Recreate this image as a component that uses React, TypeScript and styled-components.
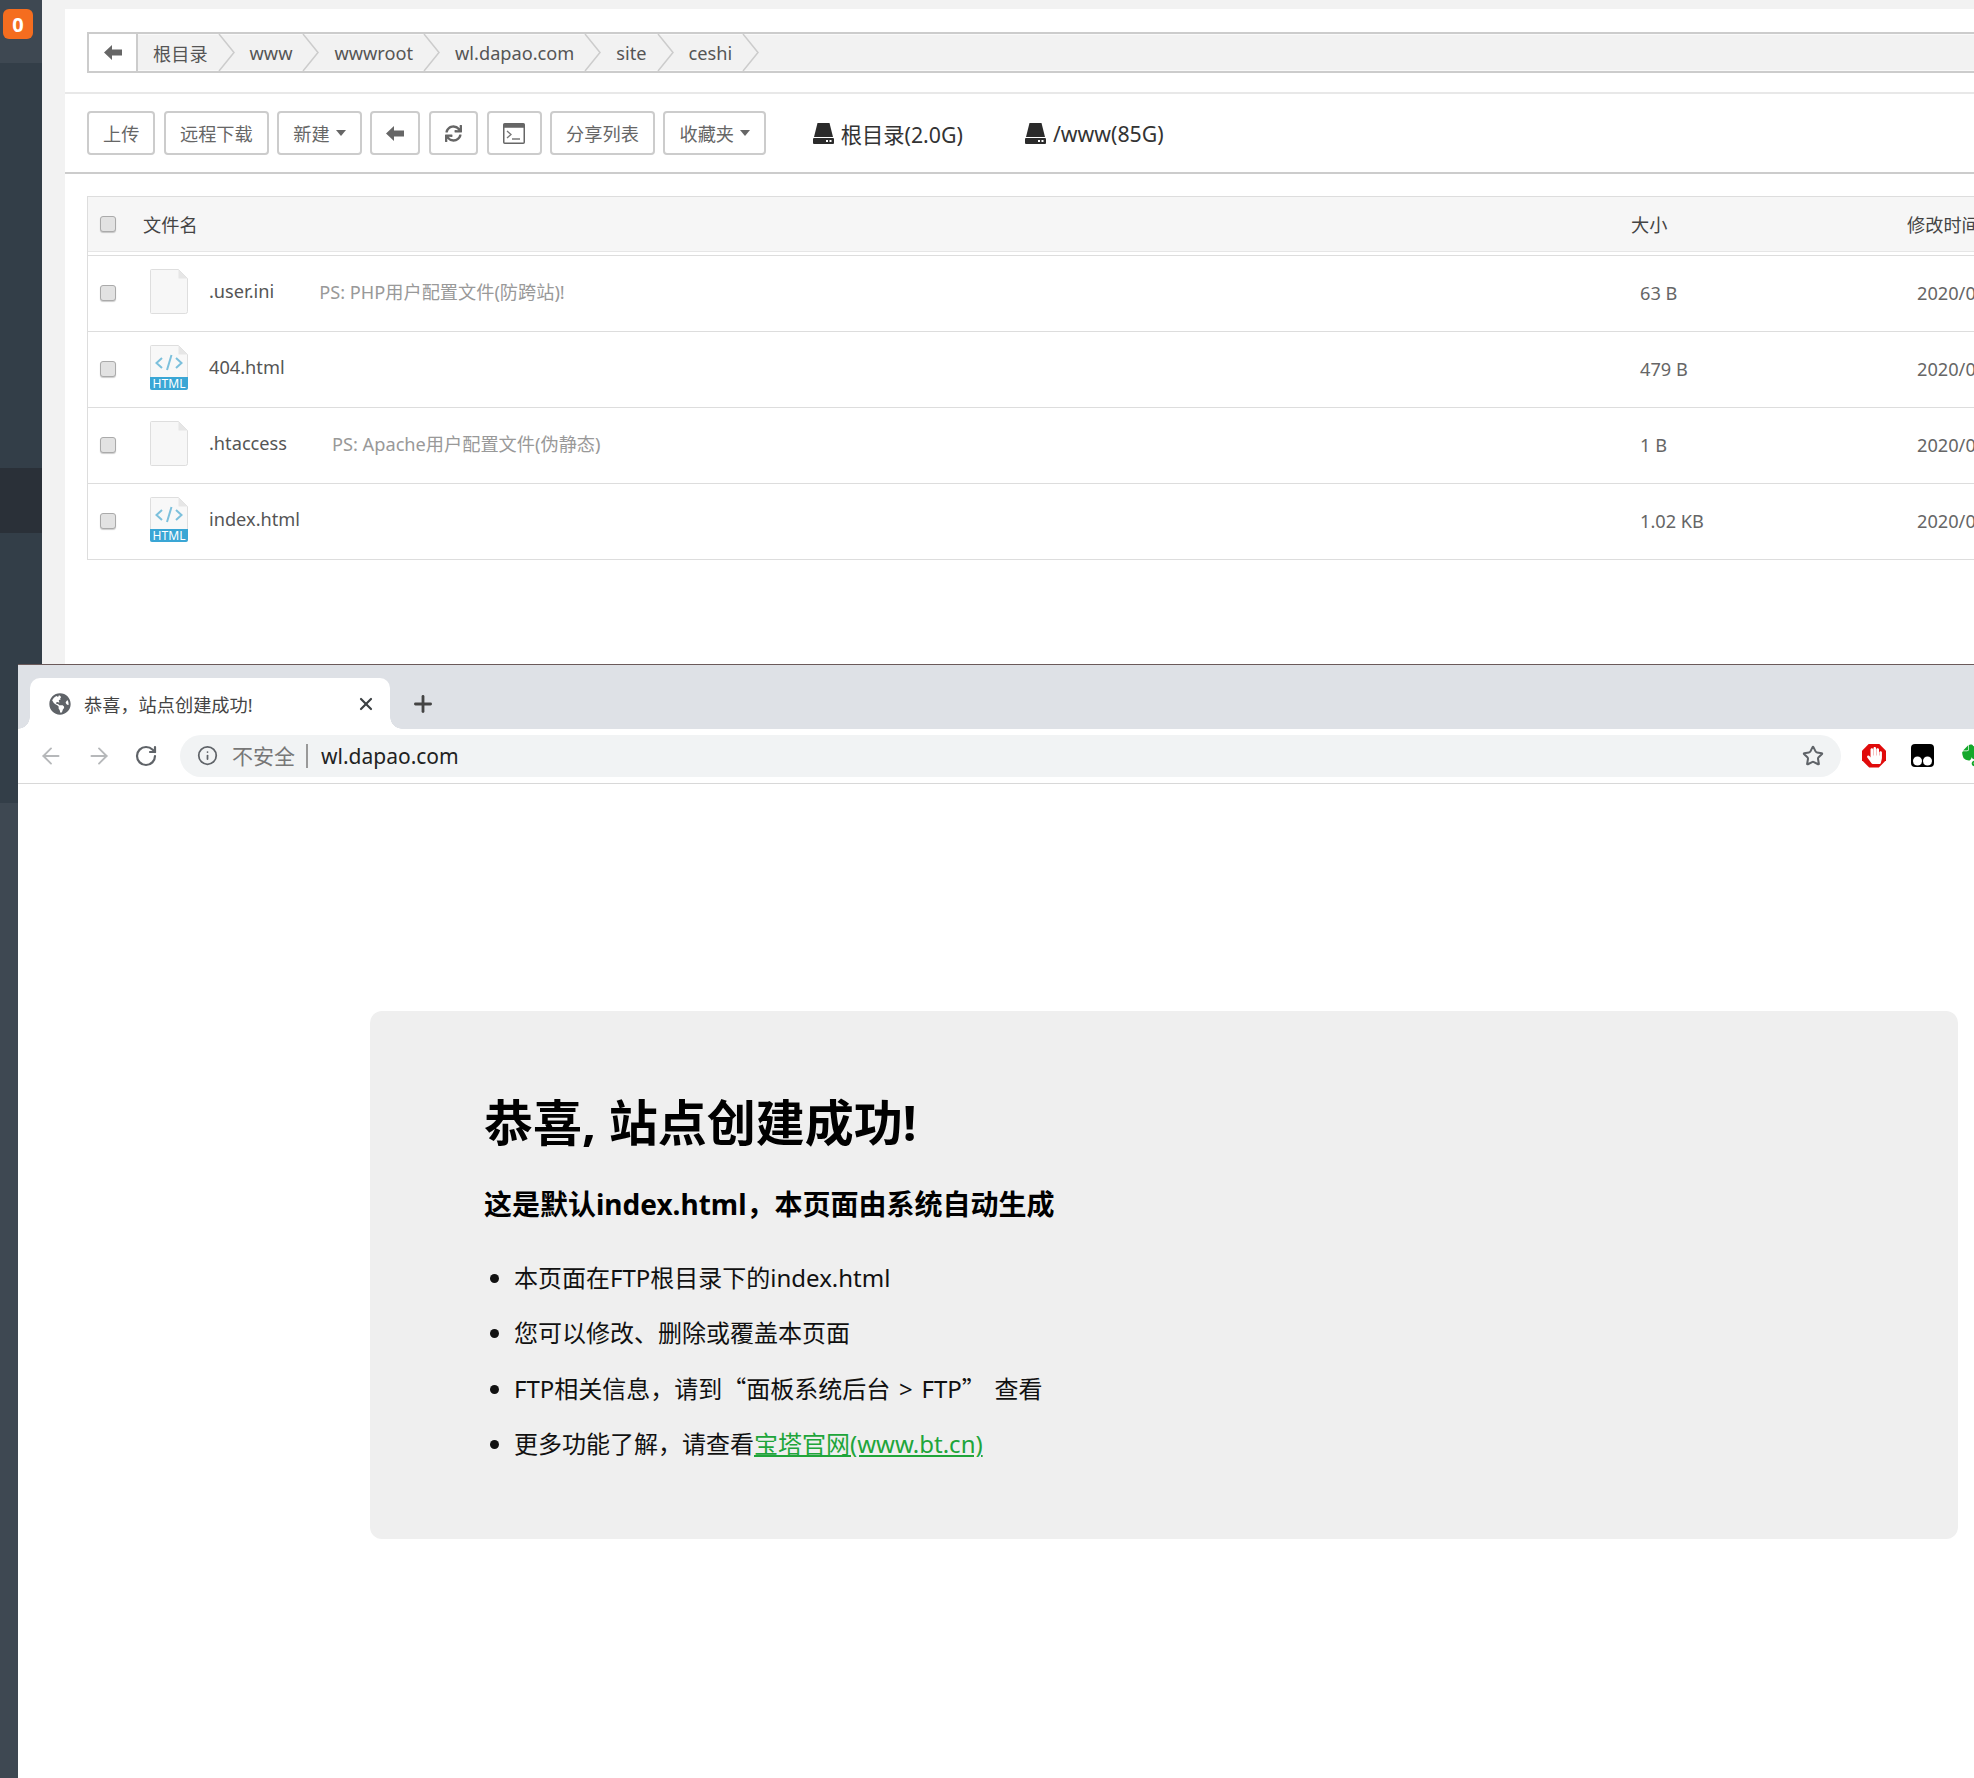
import styled, { createGlobalStyle } from 'styled-components'
import { ArrowLeft, ArrowRight, Info, Plus, RotateCw, Star, X } from 'lucide-react'
import { FaEvernote, FaGlobeAmericas, FaHandPaper, FaSync } from 'react-icons/fa'

const FONT = `"Noto Sans", "Noto Sans CJK SC", sans-serif`

const GlobalStyle = createGlobalStyle`
  html, body {
    margin: 0;
    padding: 0;
    width: 1974px;
    height: 1778px;
    overflow: hidden;
    background: #fff;
    font-family: ${FONT};
  }
`

const crumbs = ['根目录', 'www', 'wwwroot', 'wl.dapao.com', 'site', 'ceshi']

const files = [
  { name: '.user.ini', note: 'PS: PHP用户配置文件(防跨站)!', size: '63 B', html: false },
  { name: '404.html', note: '', size: '479 B', html: true },
  { name: '.htaccess', note: 'PS: Apache用户配置文件(伪静态)', size: '1 B', html: false },
  { name: 'index.html', note: '', size: '1.02 KB', html: true },
]

const BackArrow = () => (
  <svg width="18" height="15" viewBox="0 0 18 15">
    <path d="M0 7.5 8 0v4.5h10v6H8V15z" fill="#666" />
  </svg>
)

const Chevron = () => (
  <ChevronSvg width="17" height="37" viewBox="0 0 17 37">
    <path d="M1 0 16 18.5 1 37" fill="none" stroke="#ccc" strokeWidth="1.5" />
  </ChevronSvg>
)

const TerminalIcon = () => (
  <svg width="22" height="21" viewBox="0 0 22 21">
    <rect x="0.75" y="0.75" width="20.5" height="19.5" rx="1" fill="#fff" stroke="#666" strokeWidth="1.5" />
    <rect x="0.75" y="0.75" width="20.5" height="4" fill="#666" />
    <path d="M4 8l4 3.5L4 15" fill="none" stroke="#777" strokeWidth="1.3" />
    <path d="M9 16h8" stroke="#777" strokeWidth="1.5" />
  </svg>
)

const DiskIcon = () => (
  <svg width="21" height="21" viewBox="0 0 21 21">
    <path d="M4.5 0h12l3.5 14H1z" fill="#2b2b2b" />
    <rect x="0" y="15" width="21" height="6" rx="1" fill="#2b2b2b" />
    <rect x="13" y="17" width="2" height="2" fill="#fff" />
    <rect x="16.5" y="17" width="2" height="2" fill="#fff" />
  </svg>
)

const FileIcon = ({ html }: { html: boolean }) => (
  <FileSvg width="38" height="45" viewBox="0 0 38 45">
    <path d="M1.5.5h27l9 9v33a2 2 0 0 1-2 2h-34a1 1 0 0 1-1-1V1.5a1 1 0 0 1 1-1z" fill={html ? '#f8f8f8' : '#f7f7f7'} stroke="#dedede" />
    <path d="M28.5.5v9h9z" fill="#e6e6e6" />
    {html && (
      <>
        <path d="M12 13l-5.500 5 5.500 5M26 13l5.500 5-5.500 5M21.500 10l-4.500 15" fill="none" stroke="#7cc0dc" strokeWidth="2" />
        <path d="M0 32h38v11a2 2 0 0 1-2 2H2a2 2 0 0 1-2-2z" fill="#3aa6d5" />
        <text x="19" y="43" textAnchor="middle" fontSize="12.500" fill="#fff" fontFamily="Noto Sans, sans-serif" textLength="33" lengthAdjust="spacingAndGlyphs">HTML</text>
      </>
    )}
  </FileSvg>
)

const TamperIcon = () => (
  <svg width="23" height="23" viewBox="0 0 23 23">
    <rect width="23" height="23" rx="4" fill="#000" />
    <circle cx="6.500" cy="17" r="4.500" fill="#fff" />
    <circle cx="16.500" cy="17" r="4.500" fill="#fff" />
  </svg>
)

export default function App() {
  return (
    <Stage>
      <GlobalStyle />
      <Sidebar>
        <SideBlock $h={63} $bg="#3e4852">
          <Badge>0</Badge>
        </SideBlock>
        <SideBlock $h={405} $bg="#333e48" />
        <SideBlock $h={65} $bg="#2a3038" />
        <SideBlock $h={270} $bg="#333e48" />
        <SideBlock $h={975} $bg="#3e4852" />
      </Sidebar>

      <Main>
        <Panel>
          <PathRow>
            <Breadcrumb>
              <PathBack>
                <BackArrow />
              </PathBack>
              {crumbs.map((c) => (
                <Crumb key={c}>
                  <CrumbText>{c}</CrumbText>
                  <Chevron />
                </Crumb>
              ))}
            </Breadcrumb>
          </PathRow>

          <Toolbar>
            <Btn>上传</Btn>
            <Btn>远程下载</Btn>
            <Btn>
              新建
              <Caret />
            </Btn>
            <IconBtn $w={50}>
              <BackArrow />
            </IconBtn>
            <IconBtn $w={49}>
              <FaSync size={17} color="#666" />
            </IconBtn>
            <IconBtn $w={55}>
              <TerminalIcon />
            </IconBtn>
            <Btn>分享列表</Btn>
            <Btn>
              收藏夹
              <Caret />
            </Btn>
            <DiskList>
              <Disk>
                <DiskIcon />
                根目录(2.0G)
              </Disk>
              <Disk>
                <DiskIcon />
                /www(85G)
              </Disk>
            </DiskList>
          </Toolbar>

          <Table>
            <HeadRow>
              <CheckCell>
                <CheckBox />
              </CheckCell>
              <HeadCell>文件名</HeadCell>
              <HeadCell>大小</HeadCell>
              <HeadCell>修改时间</HeadCell>
            </HeadRow>
            {files.map((f) => (
              <FileRow key={f.name}>
                <CheckCell>
                  <CheckBox />
                </CheckCell>
                <NameCell>
                  <FileIcon html={f.html} />
                  <FileName>{f.name}</FileName>
                  {f.note && <FileNote>{f.note}</FileNote>}
                </NameCell>
                <ValueCell $pad={9}>{f.size}</ValueCell>
                <ValueCell $pad={10}>2020/0</ValueCell>
              </FileRow>
            ))}
          </Table>
        </Panel>
      </Main>

      <BrowserWindow>
        <TabStrip>
          <ActiveTab>
            <FaGlobeAmericas size={22} color="#5f6368" />
            <TabTitle>恭喜，站点创建成功!</TabTitle>
            <X size={20} strokeWidth={2.6} color="#3c4043" />
          </ActiveTab>
          <NewTab>
            <Plus size={26} strokeWidth={2.6} color="#444" />
          </NewTab>
        </TabStrip>

        <NavBar>
          <NavIcons>
            <ArrowLeft size={26} strokeWidth={1.7} color="#b6b8ba" />
            <ArrowRight size={26} strokeWidth={1.7} color="#b6b8ba" />
            <RotateCw size={24} strokeWidth={2.2} color="#5f6368" />
          </NavIcons>
          <Omnibox>
            <Info size={21} strokeWidth={2} color="#5f6368" />
            <Insecure>不安全</Insecure>
            <Url>wl.dapao.com</Url>
            <Star size={22} strokeWidth={2.2} color="#5f6368" />
          </Omnibox>
          <Extensions>
            <StopSign>
              <FaHandPaper size={17} color="#fff" />
            </StopSign>
            <TamperIcon />
            <FaEvernote size={25} color="#14a82b" />
          </Extensions>
        </NavBar>

        <Page>
          <Card>
            <Title>恭喜, 站点创建成功!</Title>
            <SubTitle>这是默认index.html，本页面由系统自动生成</SubTitle>
            <Tips>
              <li>本页面在FTP根目录下的index.html</li>
              <li>您可以修改、删除或覆盖本页面</li>
              <li>
                FTP相关信息，请到<WideQuote>“</WideQuote>面板系统后台 &gt; FTP<WideQuote>”</WideQuote> 查看
              </li>
              <li>
                更多功能了解，请查看<GreenLink href="#">宝塔官网(www.bt.cn)</GreenLink>
              </li>
            </Tips>
          </Card>
        </Page>
      </BrowserWindow>
    </Stage>
  )
}

const Stage = styled.div`
  position: relative;
  display: flex;
  width: 1974px;
  height: 1778px;
  overflow: hidden;
  background: #f2f2f2;
`

const Sidebar = styled.aside`
  display: flex;
  flex-direction: column;
  flex: 0 0 42px;
`

const SideBlock = styled.div<{ $h: number; $bg: string }>`
  flex: 0 0 ${(p) => p.$h}px;
  background: ${(p) => p.$bg};
  padding: 9px 0 0 3px;
  box-sizing: border-box;
`

const Badge = styled.div`
  display: flex;
  align-items: center;
  justify-content: center;
  width: 30px;
  height: 30px;
  border-radius: 6px;
  background: #f56d1f;
  color: #fff;
  font-size: 20px;
  font-weight: 700;
`

const Main = styled.main`
  flex: 1;
  min-width: 0;
  padding: 9px 0 0 23px;
`

const Panel = styled.section`
  height: 100%;
  background: #fff;
  overflow: hidden;
  font-size: 18.2px;
  color: #555;
`

const PathRow = styled.div`
  padding: 23px 0 19px 22px;
  border-bottom: 2px solid #e8e8e8;
`

const Breadcrumb = styled.nav`
  display: flex;
  height: 37px;
  margin-right: -4px;
  border: 2px solid #ccc;
  background: #f2f2f2;
  box-shadow: inset 0 1px 0 #f9f9f9, inset 0 -1px 0 #f9f9f9;
`

const PathBack = styled.div`
  display: flex;
  align-items: center;
  justify-content: center;
  flex: 0 0 47px;
  background: #fff;
  border-right: 2px solid #ccc;
`

const Crumb = styled.div`
  display: flex;
  align-items: center;
`

const CrumbText = styled.span`
  padding: 0 10px 0 15px;
  white-space: nowrap;
  color: #555;
`

const ChevronSvg = styled.svg`
  display: block;
  flex: none;
`

const Toolbar = styled.div`
  display: flex;
  align-items: center;
  gap: 8.6px;
  height: 78px;
  padding-left: 22px;
  border-bottom: 2px solid #ccc;
`

const Btn = styled.div`
  display: flex;
  align-items: center;
  gap: 6px;
  height: 44px;
  padding: 0 14px;
  box-sizing: border-box;
  border: 2px solid #ccc;
  border-radius: 4px;
  color: #666;
  white-space: nowrap;
`

const IconBtn = styled(Btn)<{ $w: number }>`
  justify-content: center;
  width: ${(p) => p.$w}px;
  padding: 0;
`

const Caret = styled.span`
  width: 0;
  height: 0;
  border-top: 6px solid #666;
  border-left: 5.5px solid transparent;
  border-right: 5.5px solid transparent;
`

const DiskList = styled.div`
  display: flex;
  gap: 62px;
  margin-left: 38px;
`

const Disk = styled.div`
  display: flex;
  align-items: center;
  gap: 7px;
  font-size: 21.3px;
  color: #333;
  white-space: nowrap;
`

const Table = styled.div`
  margin: 22px -4px 0 22px;
  border: 1px solid #ddd;
`

const tableColumns = `grid-template-columns: 55px 1488px 276px 1fr;`

const HeadRow = styled.div`
  display: grid;
  ${tableColumns}
  align-items: center;
  height: 55px;
  box-sizing: border-box;
  background: #f6f6f6;
  box-shadow: 0 3px 0 #fff, 0 4px 0 #ddd;
  margin-bottom: 4px;
  border-bottom: 1px solid #e6e6e6;
`

const HeadCell = styled.div`
  color: #444;
  white-space: nowrap;
  overflow: hidden;
`

const FileRow = styled.div`
  display: grid;
  ${tableColumns}
  align-items: center;
  height: 76px;
  box-sizing: border-box;
  padding-bottom: 2px;
  border-bottom: 1px solid #ddd;

  &:last-child {
    height: 75px;
    border-bottom: none;
  }
`

const CheckCell = styled.div`
  padding-left: 12px;
`

const CheckBox = styled.div`
  width: 16px;
  height: 16px;
  box-sizing: border-box;
  border: 1px solid #aaa;
  border-radius: 3px;
  background: #e2e2e2;
  box-shadow: 0 1px 1px rgba(0, 0, 0, 0.2);
`

const NameCell = styled.div`
  display: flex;
  align-items: center;
  padding: 0 0 3px 7px;
`

const FileSvg = styled.svg`
  flex: none;
  overflow: visible;
`

const FileName = styled.span`
  margin-left: 21px;
  color: #555;
`

const FileNote = styled.span`
  margin-left: 45px;
  color: #999;
`

const ValueCell = styled.div<{ $pad: number }>`
  padding-left: ${(p) => p.$pad}px;
  color: #666;
  white-space: nowrap;
`

const BrowserWindow = styled.div`
  position: absolute;
  left: 18px;
  top: 664px;
  right: 0;
  bottom: 0;
  display: flex;
  flex-direction: column;
  overflow: hidden;
  background: #fff;
  border-top: 1px solid #6b5a5a;
`

const TabStrip = styled.div`
  display: flex;
  flex: 0 0 64px;
  box-sizing: border-box;
  padding: 13px 0 0 12px;
  background: #dee1e6;
`

const ActiveTab = styled.div`
  position: relative;
  display: flex;
  align-items: center;
  width: 360px;
  padding: 0 14px 0 19px;
  box-sizing: border-box;
  background: #fff;
  border-radius: 10px 10px 0 0;

  &::before,
  &::after {
    content: '';
    position: absolute;
    bottom: 0;
    width: 12px;
    height: 12px;
  }

  &::before {
    left: -12px;
    background: radial-gradient(circle at 0 0, #dee1e6 11.500px, #fff 12px);
  }

  &::after {
    right: -12px;
    background: radial-gradient(circle at 100% 0, #dee1e6 11.500px, #fff 12px);
  }
`

const TabTitle = styled.span`
  flex: 1;
  margin-left: 13px;
  font-size: 18.2px;
  color: #444;
  white-space: nowrap;
`

const NewTab = styled.div`
  display: flex;
  align-items: center;
  align-self: flex-start;
  height: 51px;
  margin-left: 20px;
`

const NavBar = styled.div`
  display: flex;
  align-items: center;
  flex: 0 0 55px;
  box-sizing: border-box;
  border-bottom: 1px solid #d8d8d8;
  padding-bottom: 1px;
`

const NavIcons = styled.div`
  display: flex;
  align-items: center;
  flex: none;
  gap: 22px;
  width: 162px;
  padding-left: 20px;
  box-sizing: border-box;
`

const Omnibox = styled.div`
  display: flex;
  align-items: center;
  flex: none;
  width: 1661px;
  height: 42px;
  box-sizing: border-box;
  padding: 0 17px;
  border-radius: 21px;
  background: #f1f3f4;
`

const Insecure = styled.span`
  margin-left: 14px;
  padding-right: 11px;
  border-right: 2px solid #999;
  font-size: 21px;
  line-height: 24px;
  color: #777;
`

const Url = styled.span`
  flex: 1;
  margin-left: 13px;
  font-size: 21px;
  color: #222;
`

const Extensions = styled.div`
  display: flex;
  align-items: center;
  gap: 25px;
  margin-left: 21px;
  flex: none;
`

const StopSign = styled.div`
  display: flex;
  align-items: center;
  justify-content: center;
  width: 24px;
  height: 24px;
  background: #e00b0b;
  clip-path: polygon(30% 0, 70% 0, 100% 30%, 100% 70%, 70% 100%, 30% 100%, 0 70%, 0 30%);
`

const Page = styled.div`
  flex: 1;
  padding: 227px 0 0 352px;
`

const Card = styled.div`
  width: 1588px;
  height: 528px;
  box-sizing: border-box;
  padding: 81px 0 0 114px;
  border-radius: 12px;
  background: #efefef;
  color: #111;
`

const Title = styled.h1`
  margin: 0;
  font-size: 49px;
  line-height: 60px;
  font-weight: 700;
  color: #000;
`

const SubTitle = styled.h3`
  margin: 32px 0 0;
  font-size: 28px;
  line-height: 40px;
  font-weight: 700;
  color: #000;
`

const Tips = styled.ul`
  margin: 26px 0 0;
  padding-left: 30px;
  font-size: 24px;
  line-height: 55.4px;
  word-spacing: 2.5px;
`

const WideQuote = styled.span`
  font-family: "Noto Sans CJK SC", sans-serif;
  line-height: 0;
`

const GreenLink = styled.a`
  color: #20a53a;
`
